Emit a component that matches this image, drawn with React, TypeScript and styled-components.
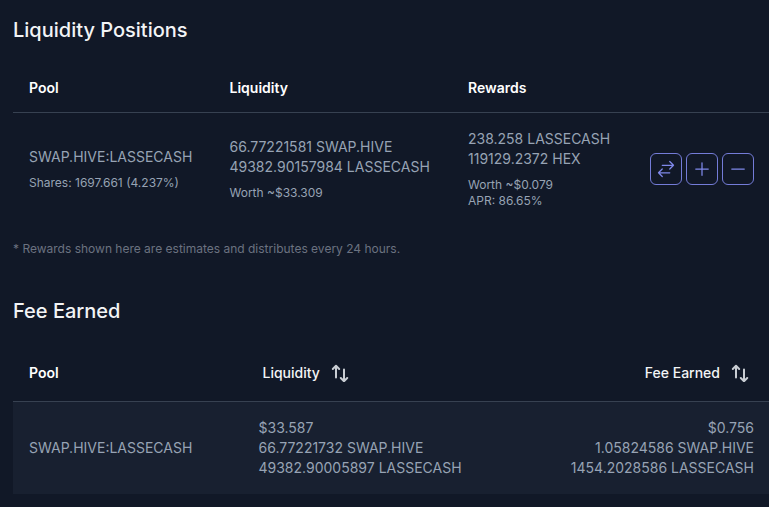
import { FC } from 'react'
import styled, { createGlobalStyle } from 'styled-components'

const GlobalStyle = createGlobalStyle`
  html, body {
    margin: 0;
    padding: 0;
    background: #111827;
    overflow: hidden;
  }
  body {
    font-family: Inter, "Liberation Sans", sans-serif;
    color: #97a3b4;
  }
`

const Page = styled.div`
  height: 507px;
  padding: 16px 0 0 13px;
  box-sizing: border-box;
  overflow: hidden;
`

const Title = styled.h2`
  margin: 0;
  font-size: 20px;
  line-height: 28px;
  font-weight: 500;
  color: #f3f4f6;
`

const Row = styled.div<{ $columns: string }>`
  display: grid;
  grid-template-columns: ${(p) => p.$columns};
  align-items: center;
`

const HeadRow = styled(Row)<{ $height: number; $bottom: number }>`
  box-sizing: border-box;
  height: ${(p) => p.$height}px;
  padding-bottom: ${(p) => p.$bottom}px;
  align-items: end;
  border-bottom: 1px solid #374151;
  color: #fff;
  font-size: 14px;
  line-height: 20px;
  font-weight: 600;
`

const HeadCell = styled.div<{ $right?: boolean; $indent?: number }>`
  display: flex;
  align-items: center;
  gap: 11px;
  padding: 0 ${(p) => (p.$right ? 20 : 15)}px 0 ${(p) => 16 + (p.$indent ?? 0)}px;
  justify-content: ${(p) => (p.$right ? 'flex-end' : 'flex-start')};
`

const SortCell = styled(HeadCell)`
  font-weight: 500;
  color: #f3f4f6;
`

const Cell = styled.div<{ $right?: boolean }>`
  padding: 0 15px 0 16px;
  font-size: 14px;
  line-height: 20px;
  text-align: ${(p) => (p.$right ? 'right' : 'left')};
  white-space: nowrap;
`

const PositionRow = styled(Row)`
  height: 112px;
`

const Small = styled.div<{ $gap?: number }>`
  font-size: 12px;
  line-height: 16px;
  margin-top: ${(p) => p.$gap ?? 0}px;
`

const Actions = styled.div`
  display: flex;
  gap: 4px;
  justify-content: flex-end;
  padding-right: 15px;
`

const IconButton = styled.button`
  width: 32px;
  height: 32px;
  padding: 0;
  display: flex;
  align-items: center;
  justify-content: center;
  background: transparent;
  border: 1px solid #747cd8;
  border-radius: 6px;
  color: #7f88ea;
`

const Note = styled.p`
  margin: 0 0 40px;
  padding-top: 16px;
  font-size: 12px;
  line-height: 16px;
  color: #6b7280;
`

const FeeRow = styled(Row)`
  height: 92px;
  background: #182030;
`

const SwapIcon: FC = () => (
  <svg width="20" height="20" viewBox="0 0 24 24" fill="none" stroke="currentColor" strokeWidth="1.5" strokeLinecap="round" strokeLinejoin="round">
    <path d="M7.5 21 3 16.5m0 0L7.5 12M3 16.5h13.5m0-13.5L21 7.5m0 0L16.5 12M21 7.5H7.5" />
  </svg>
)

const PlusIcon: FC = () => (
  <svg width="20" height="20" viewBox="0 0 24 24" fill="none" stroke="currentColor" strokeWidth="1.5" strokeLinecap="round" strokeLinejoin="round">
    <path d="M12 4.5v15m7.5-7.5h-15" />
  </svg>
)

const MinusIcon: FC = () => (
  <svg width="20" height="20" viewBox="0 0 24 24" fill="none" stroke="currentColor" strokeWidth="1.5" strokeLinecap="round" strokeLinejoin="round">
    <path d="M19.5 12h-15" />
  </svg>
)

const SortIcon: FC = () => (
  <svg width="18" height="18" viewBox="0 0 18 18" fill="none" stroke="#c9cdd3" strokeWidth="2" strokeLinecap="round" strokeLinejoin="round">
    <path d="M5 13.5V2M1.8 5 5 1.8 8.2 5" />
    <path d="M13 5.5V17M9.8 14l3.2 3.2 3.2-3.2" />
  </svg>
)

const POSITION_COLUMNS = '200.5px 238.5px 1fr 119px'
const FEE_COLUMNS = '229.5px 1fr 1fr'

export default function App() {
  return (
    <Page>
      <GlobalStyle />
      <Title>Liquidity Positions</Title>

      <HeadRow $columns={POSITION_COLUMNS} $height={69} $bottom={14}>
        <HeadCell>Pool</HeadCell>
        <HeadCell>Liquidity</HeadCell>
        <HeadCell>Rewards</HeadCell>
        <div />
      </HeadRow>
      <PositionRow $columns={POSITION_COLUMNS}>
        <Cell>
          SWAP.HIVE:LASSECASH
          <Small $gap={8}>Shares: 1697.661 (4.237%)</Small>
        </Cell>
        <Cell>
          66.77221581 SWAP.HIVE
          <br />
          49382.90157984 LASSECASH
          <Small $gap={8}>Worth ~$33.309</Small>
        </Cell>
        <Cell>
          238.258 LASSECASH
          <br />
          119129.2372 HEX
          <Small $gap={8}>Worth ~$0.079</Small>
          <Small>APR: 86.65%</Small>
        </Cell>
        <Actions>
          <IconButton><SwapIcon /></IconButton>
          <IconButton><PlusIcon /></IconButton>
          <IconButton><MinusIcon /></IconButton>
        </Actions>
      </PositionRow>
      <Note>* Rewards shown here are estimates and distributes every 24 hours.</Note>

      <Title>Fee Earned</Title>
      <HeadRow $columns={FEE_COLUMNS} $height={77} $bottom={18}>
        <HeadCell>Pool</HeadCell>
        <SortCell $indent={4}>Liquidity <SortIcon /></SortCell>
        <SortCell $right>Fee Earned <SortIcon /></SortCell>
      </HeadRow>
      <FeeRow $columns={FEE_COLUMNS}>
        <Cell>SWAP.HIVE:LASSECASH</Cell>
        <Cell>
          $33.587
          <br />
          66.77221732 SWAP.HIVE
          <br />
          49382.90005897 LASSECASH
        </Cell>
        <Cell $right>
          $0.756
          <br />
          1.05824586 SWAP.HIVE
          <br />
          1454.2028586 LASSECASH
        </Cell>
      </FeeRow>
    </Page>
  )
}
